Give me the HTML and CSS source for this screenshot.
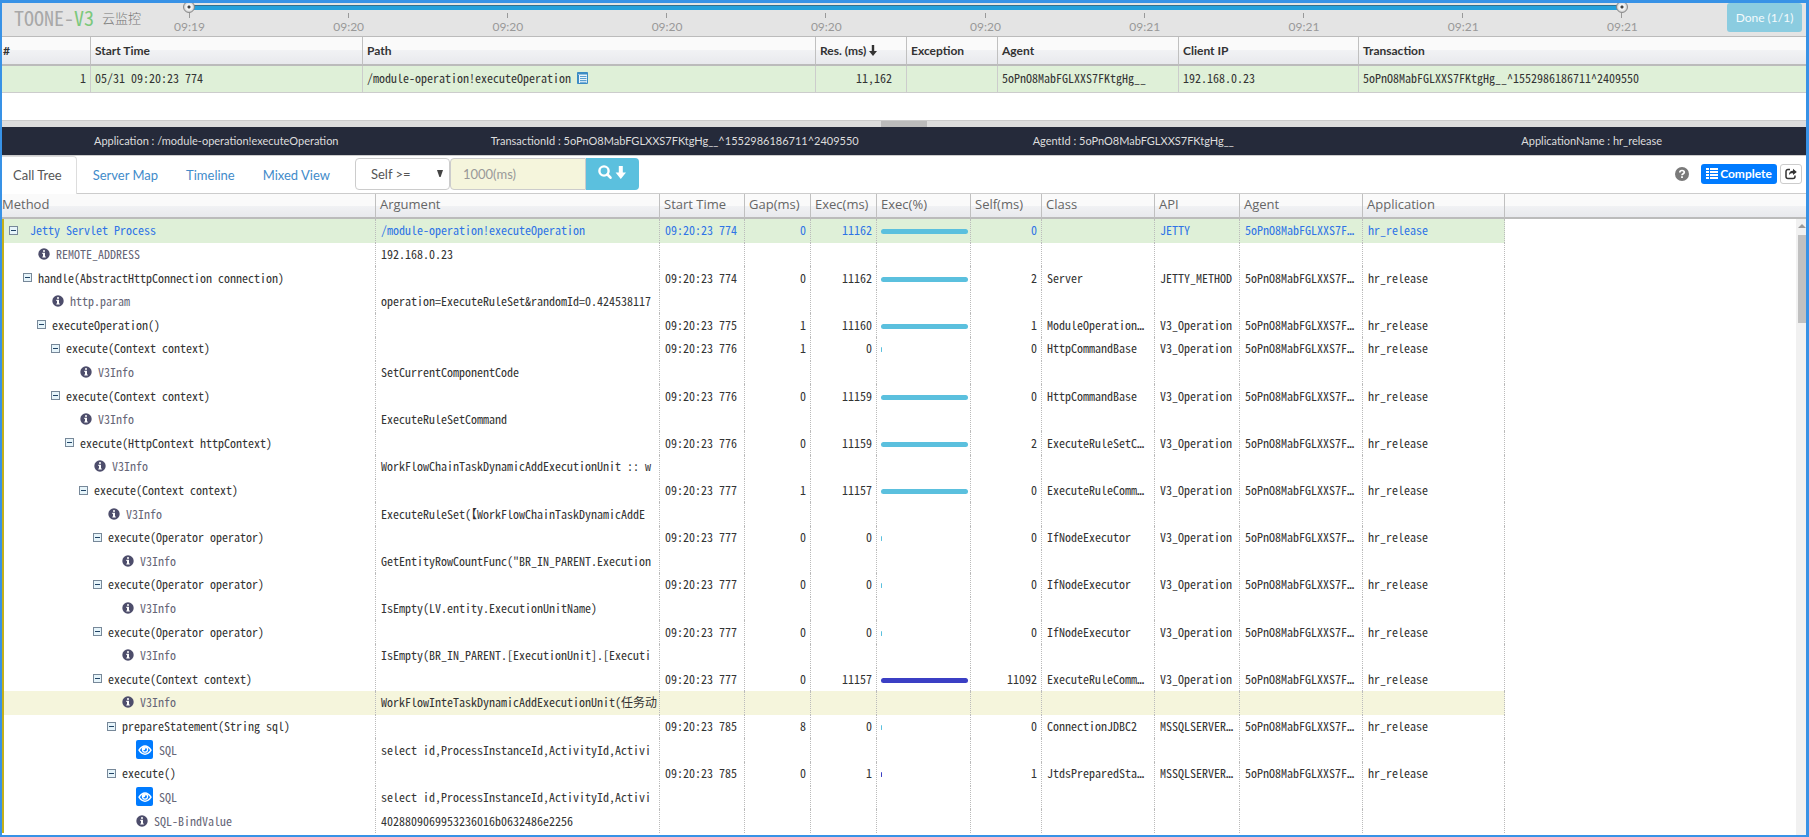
FILE: index.html
```html
<!DOCTYPE html>
<html lang="en">
<head>
<meta charset="utf-8">
<title>TOONE-V3 云监控</title>
<link rel="stylesheet" href="styles.css">
</head>
<body>
<svg class="sprite" aria-hidden="true">
  <symbol id="i-info" viewBox="0 0 12 12"><circle cx="6" cy="6" r="5.7" fill="#4d4d6b"/><path d="M5 2.2h2v1.6H5zM4.3 4.8H7v3.6h.8v1.2H4.3V8.400H5V6h-.7z" fill="#fff"/></symbol>
  <symbol id="i-eye" viewBox="0 0 14 12"><path d="M1 6.200C2.800 3.300 4.800 2 7 2s4.200 1.300 6 4.200C11.200 9 9.200 10.200 7 10.200S2.800 9 1 6.200z" fill="none" stroke="#fff" stroke-width="1.400"/><circle cx="7" cy="5.600" r="2.600" fill="none" stroke="#fff" stroke-width="1.300"/><path d="M4 3.400h4L6.800 6 4.600 6.600z" fill="#fff"/></symbol>
</svg>
<div class="app">
  <header class="topbar">
    <h1 class="logo">TOONE-<span class="logo-v">V3</span><span class="logo-cn">云监控</span></h1>
    <div class="timeline">
      <div class="range">
        <div class="range-fill"></div>
        <input type="range" min="0" max="100" value="0" aria-label="Range start">
        <input type="range" min="0" max="100" value="100" aria-label="Range end">
      </div>
      <ol class="ticks">
        <li>09:19</li><li>09:20</li><li>09:20</li><li>09:20</li><li>09:20</li><li>09:20</li><li>09:21</li><li>09:21</li><li>09:21</li><li>09:21</li>
      </ol>
    </div>
    <button class="done" type="button" disabled>Done (1/1)</button>
  </header>

  <section class="list">
    <table class="tx">
      <colgroup><col class="t1"><col class="t2"><col class="t3"><col class="t4"><col class="t5"><col class="t6"><col class="t7"><col></colgroup>
      <thead><tr><th class="first">#</th><th>Start Time</th><th>Path</th><th>Res. (ms) <svg width="8" height="11" viewBox="0 0 8 11"><path d="M2.800 0h2.400v6H8L4 11 0 6h2.800z" fill="#333"/></svg></th><th>Exception</th><th>Agent</th><th>Client IP</th><th>Transaction</th></tr></thead>
      <tbody><tr><td class="num">1</td><td>05/31 09:20:23 774</td><td>/module-operation!executeOperation <svg class="doc" width="11" height="12" viewBox="0 0 11 12"><path d="M.5.5h10v11H.5z" fill="#eaf4fb" stroke="#3d8cc4"/><path d="M.5.5h10v2H.5zM.5 2v9.500h1.500V2z" fill="#3d8cc4"/><path d="M3 4.500h6.500M3 6.500h6.500M3 8.500h6.500M3 10.300h6.500" stroke="#5a9fd0"/></svg></td><td class="num res">11,162</td><td></td><td>5oPnO8MabFGLXXS7FKtgHg__</td><td>192.168.0.23</td><td>5oPnO8MabFGLXXS7FKtgHg__^1552986186711^2409550</td></tr></tbody>
    </table>
  </section>
  <div class="splitter"><span class="grip"></span></div>

  <div class="info-bar">
    <span>Application : /module-operation!executeOperation</span>
    <span>TransactionId : 5oPnO8MabFGLXXS7FKtgHg__^1552986186711^2409550</span>
    <span>AgentId : 5oPnO8MabFGLXXS7FKtgHg__</span>
    <span>ApplicationName : hr_release</span>
  </div>

  <nav class="tabs">
    <a class="tab active" href="#tree">Call Tree</a>
    <a class="tab" href="#map">Server Map</a>
    <a class="tab" href="#time">Timeline</a>
    <a class="tab" href="#mixed">Mixed View</a>
    <form class="search">
      <div class="select-wrap">
        <select aria-label="Search field"><option>Self &gt;=</option></select>
        <svg width="6" height="7" viewBox="0 0 6 7"><path d="M0 0h6L3.600 7H2.400z" fill="#444"/></svg>
      </div>
      <input type="text" placeholder="1000(ms)" aria-label="Milliseconds">
      <button type="button" aria-label="Search next"><svg width="28" height="15" viewBox="0 0 28 15"><circle cx="6" cy="6" r="4.600" fill="none" stroke="#fff" stroke-width="2.400"/><path d="M9.500 9.500l3 3.200" stroke="#fff" stroke-width="2.600" stroke-linecap="round"/><path d="M20.800 1h4v6.500H28L22.800 14l-5.200-6.500h3.200z" fill="#fff"/></svg></button>
    </form>
    <div class="actions">
      <svg width="14" height="14" viewBox="0 0 14 14"><circle cx="7" cy="7" r="7" fill="#7a7a7a"/><path d="M4.800 5.600C4.800 4.200 5.700 3.500 7 3.500s2.300.7 2.300 1.800C9.300 6.800 7 6.600 7 8.300" fill="none" stroke="#fff" stroke-width="1.700"/><path d="M6.100 9.300h1.800V11H6.100z" fill="#fff"/></svg>
      <button class="complete" type="button"><svg width="12" height="11" viewBox="0 0 12 11"><path d="M0 0h3v2H0zM4 0h8v2H4zM0 3h3v2H0zM4 3h8v2H4zM0 6h3v2H0zM4 6h8v2H4zM0 9h3v2H0zM4 9h8v2H4z" fill="#fff"/></svg>Complete</button>
      <button class="share" type="button" aria-label="Open in new window"><svg width="12" height="12" viewBox="0 0 12 12"><path d="M5 1.500H3A2 2 0 0 0 1 3.500v5A2 2 0 0 0 3 10.500h5a2 2 0 0 0 2-2V7.500" fill="none" stroke="#333" stroke-width="1.500"/><path d="M4 7c0-2.800 1.500-4.200 4-4.200V.8L11.800 4 8 7V5.200C6 5.200 5 5.600 4 7z" fill="#333"/></svg></button>
    </div>
  </nav>

  <main class="tree">
    <table class="calls">
      <colgroup><col class="c1"><col class="c2"><col class="c3"><col class="c4"><col class="c4"><col class="c6"><col class="c7"><col class="c8"><col class="c9"><col class="c10"><col class="c11"><col></colgroup>
      <thead><tr><th class="first">Method</th><th>Argument</th><th>Start Time</th><th>Gap(ms)</th><th>Exec(ms)</th><th>Exec(%)</th><th>Self(ms)</th><th>Class</th><th>API</th><th>Agent</th><th>Application</th><th class="rest"></th></tr></thead>
      <tbody id="rows"></tbody>
    </table>
    <div class="scroll">
      <div class="scroll-head"></div>
      <div class="scroll-track"><svg width="8" height="6" viewBox="0 0 8 6"><path d="M4 1l4 4H0z" fill="#999"/></svg><div class="scroll-thumb"></div></div>
    </div>
  </main>
</div>
<script src="rows.js"></script>
</body>
</html>
```
FILE: rows.js
```js
const AGENT = '5oPnO8MabFGLXXS7F…';
// Calls: [level, method, argument, start, gap, exec, bar, self, class, api]
// Annotations: [level, label, argument, icon]
const data = [
  [0, 'Jetty Servlet Process', '/module-operation!executeOperation', 774, 0, 11162, 'full', 0, '', 'JETTY'],
  [1, 'REMOTE_ADDRESS', '192.168.0.23', 'info'],
  [1, 'handle(AbstractHttpConnection connection)', '', 774, 0, 11162, 'full', 2, 'Server', 'JETTY_METHOD'],
  [2, 'http.param', 'operation=ExecuteRuleSet&randomId=0.424538117', 'info'],
  [2, 'executeOperation()', '', 775, 1, 11160, 'full', 1, 'ModuleOperation…', 'V3_Operation'],
  [3, 'execute(Context context)', '', 776, 1, 0, 'tiny', 0, 'HttpCommandBase', 'V3_Operation'],
  [4, 'V3Info', 'SetCurrentComponentCode', 'info'],
  [3, 'execute(Context context)', '', 776, 0, 11159, 'full', 0, 'HttpCommandBase', 'V3_Operation'],
  [4, 'V3Info', 'ExecuteRuleSetCommand', 'info'],
  [4, 'execute(HttpContext httpContext)', '', 776, 0, 11159, 'full', 2, 'ExecuteRuleSetC…', 'V3_Operation'],
  [5, 'V3Info', 'WorkFlowChainTaskDynamicAddExecutionUnit :: w', 'info'],
  [5, 'execute(Context context)', '', 777, 1, 11157, 'full', 0, 'ExecuteRuleComm…', 'V3_Operation'],
  [6, 'V3Info', 'ExecuteRuleSet(【WorkFlowChainTaskDynamicAddE', 'info'],
  [6, 'execute(Operator operator)', '', 777, 0, 0, 'tiny', 0, 'IfNodeExecutor', 'V3_Operation'],
  [7, 'V3Info', 'GetEntityRowCountFunc("BR_IN_PARENT.Execution', 'info'],
  [6, 'execute(Operator operator)', '', 777, 0, 0, 'tiny', 0, 'IfNodeExecutor', 'V3_Operation'],
  [7, 'V3Info', 'IsEmpty(LV.entity.ExecutionUnitName)', 'info'],
  [6, 'execute(Operator operator)', '', 777, 0, 0, 'tiny', 0, 'IfNodeExecutor', 'V3_Operation'],
  [7, 'V3Info', 'IsEmpty(BR_IN_PARENT.[ExecutionUnit].[Executi', 'info'],
  [6, 'execute(Context context)', '', 777, 0, 11157, 'full self', 11092, 'ExecuteRuleComm…', 'V3_Operation'],
  [7, 'V3Info', 'WorkFlowInteTaskDynamicAddExecutionUnit(任务动', 'info'],
  [7, 'prepareStatement(String sql)', '', 785, 8, 0, 'tiny', 0, 'ConnectionJDBC2', 'MSSQLSERVER…'],
  [8, 'SQL', 'select id,ProcessInstanceId,ActivityId,Activi', 'eye'],
  [7, 'execute()', '', 785, 0, 1, 'tiny self', 1, 'JtdsPreparedSta…', 'MSSQLSERVER…'],
  [8, 'SQL', 'select id,ProcessInstanceId,ActivityId,Activi', 'eye'],
  [8, 'SQL-BindValue', '4028809069953236016b0632486e2256', 'info'],
];

const cell = (cls, html = '') => `<td class="${cls}">${html}</td>`;
const esc = s => s.replace(/&/g, '&amp;').replace(/</g, '&lt;');
const dots = s => s.replace('…', '<span class="dots">…</span>');

document.getElementById('rows').innerHTML = data.map((r, i) => {
  const [level, name, arg] = r;
  const note = typeof r[3] === 'string';
  let icon;
  if (!note) {
    icon = '<button class="toggle" type="button" aria-label="Collapse"></button>';
  } else if (r[3] === 'eye') {
    icon = '<button class="eye" type="button" aria-label="Show SQL"><svg width="14" height="12"><use href="#i-eye"/></svg></button>';
  } else {
    icon = '<svg class="info" width="12" height="12"><use href="#i-info"/></svg>';
  }
  const first = cell(note ? 'method note' : 'method',
    `<div class="node" style="--level:${level}">${icon}<span>${esc(name)}</span></div>`);
  const rest = note
    ? '<td></td>'.repeat(9)
    : cell('', '09:20:23 ' + r[3]) + cell('num', r[4]) + cell('num', r[5]) +
      cell('pct', `<div class="bar ${r[6]}"></div>`) + cell('num', r[7]) +
      cell('', dots(r[8])) + cell('', dots(r[9])) + cell('', dots(AGENT)) + cell('', 'hr_release');
  const cls = i === 0 ? 'root' : i === 20 ? 'selected' : '';
  return `<tr class="${cls}">${first}${cell('arg', esc(arg))}${rest}<td class="rest"></td></tr>`;
}).join('');
```
FILE: styles.css
```css
* { box-sizing: border-box; }
body { margin: 0; font-family: Lato, "Noto Sans CJK SC", sans-serif; font-size: 12px; color: #333; }
button, input, select { font: inherit; margin: 0; }
.sprite { display: none; }
.app { display: flex; flex-direction: column; height: 100vh; border: 3px solid #3892e6; border-left-width: 2px; border-bottom-width: 2px; overflow: hidden; background: #fff; }

.topbar { display: flex; height: 34px; background: #e4e4e4; border-bottom: 1px solid #bbb; flex: none; }
.logo { display: flex; gap: 0; margin: 0; padding-left: 12px; width: 172px; font-family: "Noto Sans Mono CJK SC", monospace; font-size: 20px; line-height: 30px; font-weight: 400; color: #a8a8a8; white-space: nowrap; }
.logo-v { color: #7cc87c; }
.logo-cn { margin-left: 8px; font-family: "Noto Sans CJK SC", sans-serif; font-weight: 300; font-size: 13px; color: #777; }
.timeline { flex: 1; }
.range { position: relative; height: 10px; margin: 0 9px; }
.range-fill { position: absolute; left: 6px; right: 6px; top: 2px; height: 5px; background: #25a0dc; border-top: 1px solid #33708f; }
.range input { position: absolute; left: 0; top: -1px; width: 100%; height: 10px; appearance: none; background: none; pointer-events: none; }
.range input::-webkit-slider-thumb { appearance: none; width: 12px; height: 12px; border-radius: 50%; border: 1px solid #888; background: radial-gradient(#444 0 1px, #f2f2f2 2px 3px, #bbb 6px); pointer-events: auto; }
.ticks { display: flex; justify-content: space-between; list-style: none; margin: 0; padding: 0; color: #999; }
.ticks li { width: 30px; text-align: center; line-height: 17px; white-space: nowrap; }
.ticks li::before { content: ""; display: block; width: 1px; height: 5px; margin: 0 auto; background: #999; }
.done { margin: 0 4px 0 90px; width: 75px; height: 29px; border: 0; border-radius: 3px; background: #8bcce0; color: #f3fafc; padding: 0; }

table { border-collapse: separate; border-spacing: 0; table-layout: fixed; width: 100%; }
th, td { padding: 0 5px; text-align: left; overflow: hidden; white-space: nowrap; }
thead th { background: linear-gradient(#fafafa 0 50%, #f1f2f4 50%, #e8e9ed); border-bottom: 2px solid #bbb; border-right: 1px solid #c0c0c0; }
td { font-family: "Noto Sans Mono CJK SC", "DejaVu Sans Mono", monospace; font-size: 12px; line-height: 16px; }
.num { text-align: right; }
.dots { font-family: "DejaVu Sans Mono", monospace; line-height: 1; }

.list { flex: none; height: 83px; }
.tx th { height: 29px; padding-left: 4px; font-weight: 700; }
.tx th:last-child, .tx td:last-child { border-right: 0; }
.tx td { height: 27px; padding: 0 4px 2px; background: #dff0d8; border-right: 1px solid #ccc; border-bottom: 1px solid #ccc; }
.tx .first { padding-left: 1px; }
.tx .res { padding-right: 14px; }
.tx svg { vertical-align: -1px; }
.t1 { width: 89px; } .t2 { width: 272px; } .t3 { width: 453px; } .t4 { width: 91px; } .t5 { width: 91px; } .t6 { width: 181px; } .t7 { width: 180px; }

.splitter { flex: none; height: 7px; background: #ddd; border-top: 1px solid #ccc; display: flex; justify-content: center; }
.grip { width: 46px; background: #bbb; }
.info-bar { flex: none; display: grid; grid-template-columns: repeat(4, 1fr); margin: 0 -15px; background: #252a3a; color: #ddd; font-size: 11px; text-align: center; line-height: 28px; height: 28px; }

.tabs { flex: none; display: flex; height: 39px; border-top: 1px solid #ccc; border-bottom: 1px solid #ccc; }
.tab { padding: 0 14px; margin-bottom: -1px; line-height: 38px; font-size: 13px; color: #428bca; text-decoration: none; }
.tab.active { margin-right: 2px; padding: 0 14px 0 11px; color: #555; background: #fff; border-right: 1px solid #ddd; border-top: 1px solid #ddd; border-top-right-radius: 4px; line-height: 37px; }
.search { display: flex; margin: 2px 0 3px 11px; font-size: 13px; color: #555; }
.select-wrap { position: relative; width: 95px; }
.select-wrap select { appearance: none; width: 100%; height: 100%; border: 1px solid #ccc; border-radius: 4px; background: #fff; color: #555; padding: 0 15px; }
.select-wrap svg { position: absolute; right: 7px; top: 12px; pointer-events: none; }
.search input { width: 136px; border: 1px solid #ccc; border-radius: 4px 0 0 4px; background: #f5f5dc; padding: 0 12px; }
.search input::placeholder { color: #999; }
.search button { width: 53px; border: 0; border-radius: 0 4px 4px 0; background: #5bc0de; padding: 0; }
.actions { display: flex; align-items: center; margin-left: auto; padding: 0 4px 2px 0; }
.actions button { display: flex; align-items: center; justify-content: center; height: 20px; border-radius: 3px; padding: 0; }
.complete { width: 76px; margin: 0 3px 0 12px; gap: 2px; border: 0; background: #007bff; color: #fff; font-weight: 700; }
.share { width: 22px; border: 1px solid #ccc; background: #fff; }

.tree { flex: 1; display: flex; min-height: 0; }
.calls { flex: 1; height: calc(100% - 2px); }
.calls th { height: 25px; padding: 0 0 3px 4px; font-family: "Open Sans", sans-serif; font-size: 13px; font-weight: 400; line-height: 18px; color: #666; }
.calls .first { padding-left: 0; }
.calls th.rest { border-right: 0; }
.calls td { padding: 0 4px 1px 5px; border-right: 1px dotted #bbb; }
.calls td.rest { border: 0; background: #fff; }
.calls td.arg { padding-right: 0; }
.calls td.method { padding: 0 0 1px; border-left: 2px solid #c5b01a; }
.calls td.note { color: #667; }
.root td { background: #dff0d8; color: #2f74e6; }
.selected td { background: #f5f5dc; }
.node { display: flex; align-items: center; height: 20px; padding-left: calc(5px + var(--level) * 14px); }
.note .node { padding-left: calc(20px + var(--level) * 14px); gap: 6px; }
.toggle { width: 9px; height: 9px; border: 1px solid #789; padding: 0; margin-right: 6px; background: linear-gradient(#246, #246) center / 5px 1px no-repeat #e6f4fa; }
.root .toggle { margin-right: 12px; }
.eye { display: flex; align-items: center; justify-content: center; width: 17px; height: 19px; border: 0; border-radius: 2px; background: #007bff; padding: 0; }
.bar { height: 5px; border-radius: 3px; background: #5bc0de; }
.bar.tiny { width: 1px; }
.bar.self { background: #3b3fc4; }
.bar.full { width: 87px; }
.calls .pct { padding: 2px 0 0 4px; }
.c1 { width: 374px; } .c2 { width: 284px; } .c3 { width: 85px; } .c4 { width: 66px; } .c6 { width: 94px; } .c7 { width: 71px; } .c8 { width: 113px; } .c9 { width: 85px; } .c10 { width: 123px; } .c11 { width: 142px; }

.scroll { width: 10px; display: flex; flex-direction: column; }
.scroll-head { height: 25px; background: linear-gradient(#fafafa 0 50%, #f1f2f4 50%, #e8e9ed); border-bottom: 2px solid #bbb; }
.scroll-track { flex: 1; background: #f1f1f1; padding: 4px 0 0 2px; }
.scroll-track svg { display: block; margin-bottom: 6px; }
.scroll-thumb { height: 88px; background: #c1c1c1; }
```
